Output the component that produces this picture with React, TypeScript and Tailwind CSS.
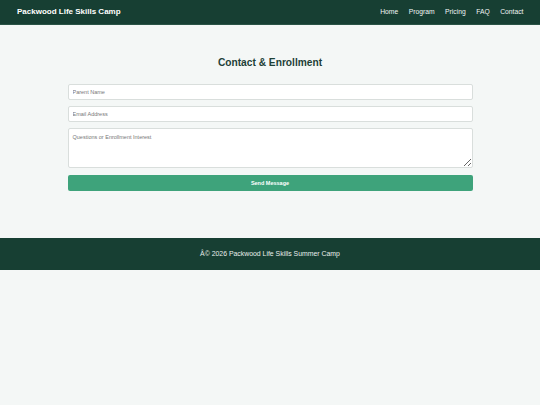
import React from "react";

export default function App() {
  const font = { fontFamily: '"Liberation Sans", Arial, sans-serif' };
  return (
    <div className="min-h-[405px] bg-[#f4f7f6] text-[#333]" style={font}>
      <header className="h-[25px] bg-[#173f33] border-b border-[#2a5446] flex items-center justify-between pl-[17px] pr-[16.5px]">
        <div className="text-white font-bold text-[8px] leading-none">Packwood Life Skills Camp</div>
        <nav className="flex gap-[10.5px] text-[6.75px] text-[#f2f5f4] leading-none">
          <span>Home</span>
          <span>Program</span>
          <span>Pricing</span>
          <span>FAQ</span>
          <span>Contact</span>
        </nav>
      </header>
      <main className="h-[213px] pt-[32px]">
        <div className="w-[405px] mx-auto">
          <h2 className="text-center text-[10.2px] font-bold text-[#1d4036] leading-[12px] mb-[15px]">Contact &amp; Enrollment</h2>
          <form className="flex flex-col gap-[6px]" onSubmit={(e) => e.preventDefault()}>
            <input
              placeholder="Parent Name"
              className="h-[16px] w-full bg-white border border-[#d9dedc] rounded-[2px] px-[4px] text-[5.5px] placeholder:text-[#777] outline-none"
              style={font}
            />
            <input
              placeholder="Email Address"
              className="h-[16px] w-full bg-white border border-[#d9dedc] rounded-[2px] px-[4px] text-[5.5px] placeholder:text-[#777] outline-none"
              style={font}
            />
            <textarea
              placeholder="Questions or Enrollment Interest"
              className="h-[40px] w-full bg-white border border-[#d9dedc] rounded-[2px] px-[4px] py-[4px] text-[5.5px] placeholder:text-[#777] outline-none block"
              style={font}
            />
            <button
              className="mt-[1px] h-[16px] w-full bg-[#3ea37b] text-white font-bold text-[5.5px] rounded-[2px]"
              style={font}
            >
              Send Message
            </button>
          </form>
        </div>
      </main>
      <footer className="h-[32px] bg-[#173f33] flex items-center justify-center text-[#e8eeeb] text-[6.9px]">
        Â© 2026 Packwood Life Skills Summer Camp
      </footer>
    </div>
  );
}
